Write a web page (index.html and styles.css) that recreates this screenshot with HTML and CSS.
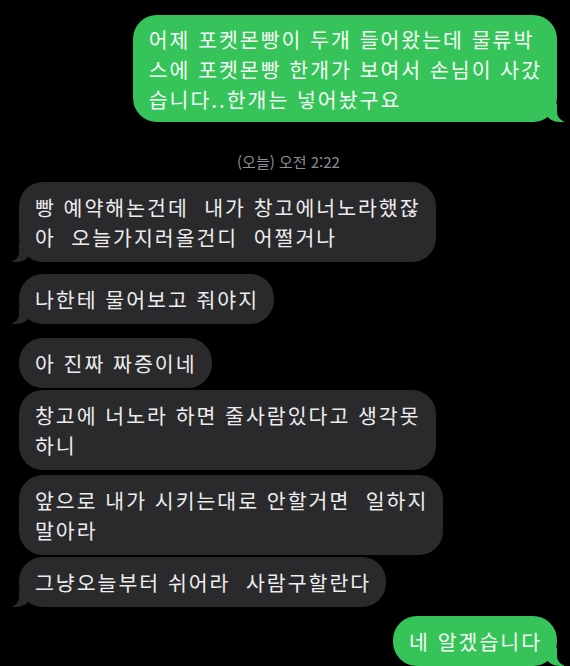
FILE: index.html
```html
<!DOCTYPE html>
<html lang="ko">
<head>
  <meta charset="UTF-8" />
  <meta name="viewport" content="width=device-width, initial-scale=1.0" />
  <title>메시지</title>
  <link rel="stylesheet" href="styles.css">
</head>
<body>

  <main class="chat">
    <div class="bubble sent tail">어제 포켓몬빵이 두개 들어왔는데 물류박<br>스에 포켓몬빵 한개가 보여서 손님이 사갔<br>습니다..한개는 넣어놨구요</div>

    <div class="stamp">(오늘) 오전 2:22</div>

    <div class="bubble recv tail">빵 예약해논건데  내가 창고에너노라했잖<br>아  오늘가지러올건디  어쩔거나</div>
    <div class="bubble recv tail gap-m">나한테 물어보고 줘야지</div>
    <div class="bubble recv gap-l">아 진짜 짜증이네</div>
    <div class="bubble recv gap-xs">창고에 너노라 하면 줄사람있다고 생각못<br>하니</div>
    <div class="bubble recv gap-s">앞으로 내가 시키는대로 안할거면  일하지<br>말아라</div>
    <div class="bubble recv tail gap-xs">그냥오늘부터 쉬어라  사람구할란다</div>

    <div class="bubble sent tail gap-last">네 알겠습니다</div>
  </main>

</body>
</html>
```

FILE: styles.css
```css
* {
  box-sizing: border-box;
  margin: 0;
  padding: 0;
}

body {
  background: #000;
  font-family: 'Noto Sans CJK KR', 'Noto Sans', sans-serif;
  color: #ededed;
  height: 666px;
  overflow: hidden;
}

.chat {
  display: flex;
  flex-direction: column;
  padding: 15px 12px 0 19px;
}

.bubble {
  position: relative;
  padding: 10px 15px 10px 16px;
  font-size: 20.5px;
  line-height: 30px;
  letter-spacing: 2px;
  border-radius: 24px;
  white-space: pre-wrap;
  max-width: 100%;
}

.sent {
  align-self: flex-end;
  background: #36c45a;
  color: #f4fff6;
  margin-right: 1px;
}

.sent:first-child {
  padding-top: 9px;
  padding-bottom: 8px;
}

.recv {
  align-self: flex-start;
  background: #2a2a2c;
}

/* tails */
.tail::before,
.tail::after {
  content: "";
  position: absolute;
  bottom: 0;
  height: 18px;
}

.sent.tail::before {
  right: -7px;
  width: 20px;
  background: #36c45a;
  border-bottom-left-radius: 16px 14px;
}

.sent.tail::after {
  right: -26px;
  width: 26px;
  background: #000;
  border-bottom-left-radius: 10px;
}

.recv.tail::before {
  left: -7px;
  width: 20px;
  background: #2a2a2c;
  border-bottom-right-radius: 16px 14px;
}

.recv.tail::after {
  left: -26px;
  width: 26px;
  background: #000;
  border-bottom-right-radius: 10px;
}

.stamp {
  align-self: center;
  margin: 29px 0 9px 0;
  font-size: 15px;
  line-height: 22px;
  color: #8e8e93;
}

.gap-xs { margin-top: 2px; }
.gap-s { margin-top: 5px; }
.gap-m { margin-top: 12px; }
.gap-l { margin-top: 14px; }
.gap-last { margin-top: 9px; }
```
